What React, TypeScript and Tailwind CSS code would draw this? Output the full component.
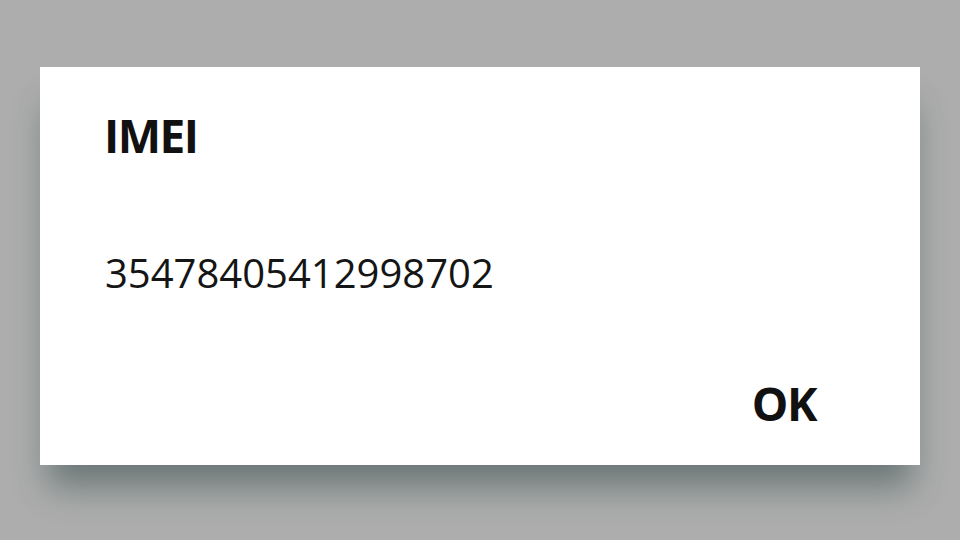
import React from "react";

export default function App() {
  return (
    <div
      className="w-[960px] h-[540px] bg-[#adadad] overflow-hidden pt-[67px] pl-[40px]"
      style={{ fontFamily: '"Open Sans", "Noto Sans", sans-serif' }}
    >
      <div className="w-[880px] h-[398px] bg-white flex flex-col shadow-[0_30px_32px_-8px_rgba(30,55,55,0.45)] pl-[64px] pr-[104px]">
        <div className="mt-[45px] text-[46px] leading-none font-bold text-[#111] tracking-[-1.5px]">
          IMEI
        </div>
        <div className="mt-[95px] text-[40px] leading-none text-[#151515] tracking-[0px] pl-[1px]">
          35478405412998702
        </div>
        <div className="mt-[87px] self-end text-[46px] leading-none font-bold text-[#111] tracking-[-1.5px]">
          OK
        </div>
      </div>
    </div>
  );
}
